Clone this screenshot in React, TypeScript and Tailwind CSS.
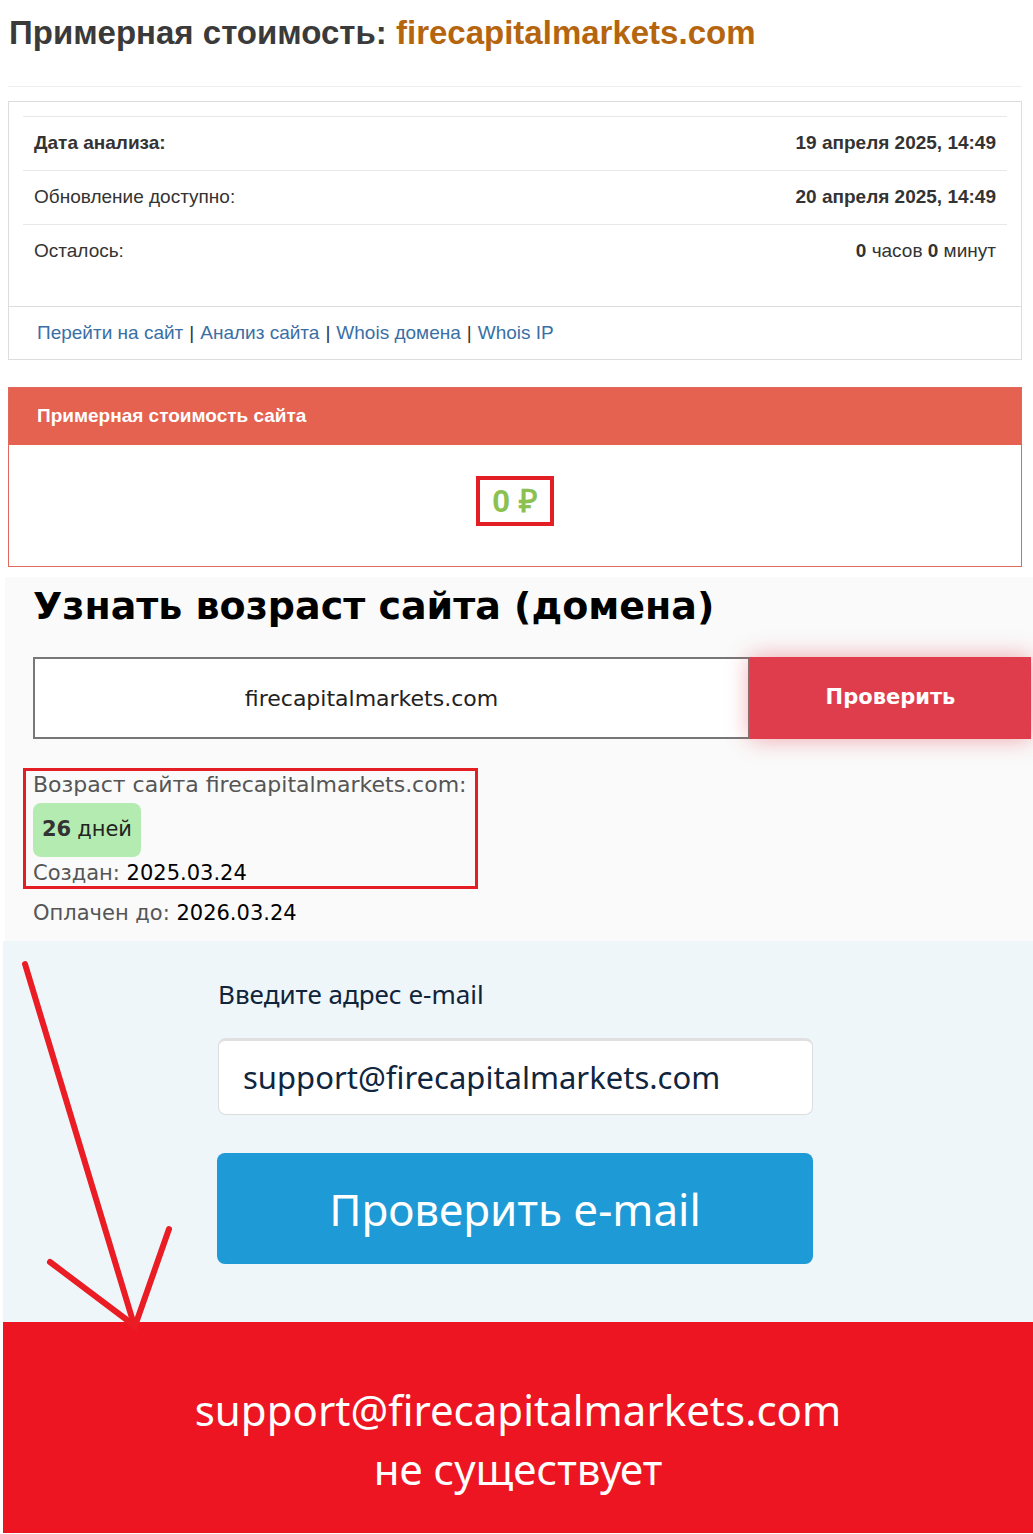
import React from 'react';

const rows = [
  { label: 'Дата анализа:', bold: true, value: <b>19 апреля 2025, 14:49</b> },
  { label: 'Обновление доступно:', bold: false, value: <b>20 апреля 2025, 14:49</b> },
  {
    label: 'Осталось:',
    bold: false,
    value: (
      <span>
        <b>0</b> часов <b>0</b> минут
      </span>
    ),
  },
];

function Arrow() {
  return (
    <svg className="pointer-events-none absolute left-0 top-0" width="1033" height="1534">
      <g stroke="#ea1c24" strokeWidth="6" strokeLinecap="round" fill="none">
        <line x1="25" y1="964" x2="135" y2="1328" />
        <line x1="50" y1="1262" x2="135" y2="1326" />
        <line x1="169" y1="1229" x2="135" y2="1326" />
      </g>
    </svg>
  );
}

export default function App() {
  return (
    <div className="relative w-[1033px] bg-white font-['Liberation_Sans',Arial,sans-serif]">
      <div className="pl-[8px] pr-[11px]">
        <h1 className="pl-[1px] pt-[12px] text-[33px] font-bold leading-[42px] text-[#3a3a3a]">
          Примерная стоимость: <span className="text-[#b5650d]">firecapitalmarkets.com</span>
        </h1>
        <div className="mt-[32px] border-t border-[#eeeeee]" />

        <div className="mt-[14px] border border-[#dddddd]">
          <div className="px-[14px] pb-[28px] pt-[14px]">
            {rows.map((r) => (
              <div
                key={r.label}
                className="flex h-[54px] items-center justify-between border-t border-[#e8e8e8] px-[11px] text-[19px] text-[#333]"
              >
                <span className={r.bold ? 'font-bold' : ''}>{r.label}</span>
                {r.value}
              </div>
            ))}
          </div>
          <div className="flex h-[53px] items-center border-t border-[#dddddd] pl-[28px] text-[19px]">
            <span className="text-[#3a6fa5]">Перейти на сайт</span>
            <span className="px-[6px] text-[#333]">|</span>
            <span className="text-[#3a6fa5]">Анализ сайта</span>
            <span className="px-[6px] text-[#333]">|</span>
            <span className="text-[#3a6fa5]">Whois домена</span>
            <span className="px-[6px] text-[#333]">|</span>
            <span className="text-[#3a6fa5]">Whois IP</span>
          </div>
        </div>

        <div className="mt-[27px] border border-[#df6a5c]">
          <div className="flex h-[57px] items-center bg-[#e4624f] px-[28px] text-[19px] font-bold text-white">
            Примерная стоимость сайта
          </div>
          <div className="flex h-[121px] justify-center pt-[31px]">
            <div className="flex h-[50px] w-[78px] items-center justify-center border-[4px] border-[#e31e24] text-[32px] font-bold text-[#8cc152]">
              0 ₽
            </div>
          </div>
        </div>
      </div>

      <div className="ml-[5px] mt-[10px] bg-[#fafafa] pb-[14px] pl-[28px] pt-[6px] font-['DejaVu_Sans',sans-serif]">
        <h2 className="text-[38px] font-bold leading-[46px] text-black">Узнать возраст сайта (домена)</h2>
        <div className="mt-[28px] flex">
          <div className="flex h-[82px] w-[717px] items-center justify-center border-2 border-[#777] bg-white pr-[40px] text-[22px] text-[#222]">
            firecapitalmarkets.com
          </div>
          <div className="flex h-[82px] w-[281px] items-center justify-center bg-[#df3c4c] text-[21px] font-bold text-white shadow-[0_0_22px_rgba(223,60,76,0.45)]">
            Проверить
          </div>
        </div>
        <div className="-ml-[10px] mt-[29px] w-[455px] border-[3px] border-[#e31e24] pl-[7px] text-[22px] text-[#555]">
          <div className="leading-[28px]">Возраст сайта firecapitalmarkets.com:</div>
          <div className="mt-[4px] flex h-[54px] w-[108px] items-center justify-center rounded-lg bg-[#b4ebb0] text-[21px] text-[#222]">
            <b className="mr-[6px] text-[#333]">26</b>дней
          </div>
          <div className="mt-[3px] text-[21px] leading-[26px]">
            Создан: <span className="text-black">2025.03.24</span>
          </div>
        </div>
        <div className="mt-[10px] text-[21px] leading-[28px] text-[#555]">
          Оплачен до: <span className="text-black">2026.03.24</span>
        </div>
      </div>

      <div className="ml-[3px] h-[381px] bg-[#eef6fa] pl-[215px] pt-[38px] font-['Noto_Sans',sans-serif]">
        <div className="text-[26px] leading-[30px] text-[#10243a]">Введите адрес e-mail</div>
        <div className="mt-[29px] flex h-[77px] w-[595px] items-center rounded-lg border border-[#dcdcdc] border-t-[3px] border-t-[#e0e0e0] bg-white pl-[24px] text-[31px] text-[#0f2540]">
          support@firecapitalmarkets.com
        </div>
        <div className="-ml-[1px] mt-[38px] flex h-[111px] w-[596px] items-center justify-center rounded-lg bg-[#1e9ad6] text-[44px] text-white">
          Проверить e-mail
        </div>
      </div>

      <div className="ml-[3px] h-[211px] bg-[#ee1522] pt-[58px] text-center font-['Noto_Sans',sans-serif] text-[42px] leading-[59px] text-white">
        <div>support@firecapitalmarkets.com</div>
        <div>не существует</div>
      </div>

      <Arrow />
    </div>
  );
}
